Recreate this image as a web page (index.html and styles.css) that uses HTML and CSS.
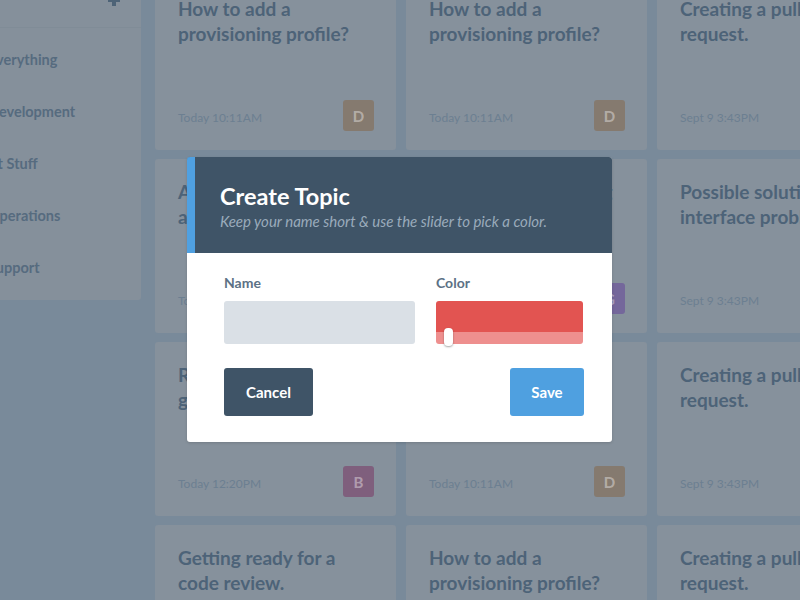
FILE: index.html
```html
<!DOCTYPE html>
<html>
<head>
<meta charset="utf-8">
<link rel="stylesheet" href="styles.css">
</head>
<body>
<div class="app">
  <aside class="sidebar">
    <div class="side-head">
      <svg class="plus" width="12" height="12" viewBox="0 0 12 12"><rect x="4" y="0" width="4" height="12" fill="#4d6377"/><rect x="0" y="4" width="12" height="4" fill="#4d6377"/></svg>
    </div>
    <ul class="topics">
      <li>Everything</li>
      <li>Development</li>
      <li>At Stuff</li>
      <li>Operations</li>
      <li>Support</li>
    </ul>
  </aside>
  <main class="grid">
    <div class="card"><h3>How to add a provisioning profile?</h3><div class="foot"><span class="date">Today 10:11AM</span><span class="av av-d">D</span></div></div>
    <div class="card"><h3>How to add a provisioning profile?</h3><div class="foot"><span class="date">Today 10:11AM</span><span class="av av-d">D</span></div></div>
    <div class="card"><h3>Creating a pull request.</h3><div class="foot"><span class="date">Sept 9 3:43PM</span><span class="av av-d">D</span></div></div>

    <div class="card"><h3>A quick guide to automated tests.</h3><div class="foot"><span class="date">Today 12:20PM</span><span class="av av-b">B</span></div></div>
    <div class="card"><h3>Setting up the staging server.</h3><div class="foot"><span class="date">Today 11:02AM</span><span class="av av-g">G</span></div></div>
    <div class="card"><h3>Possible solution to interface problem.</h3><div class="foot"><span class="date">Sept 9 3:43PM</span><span class="av av-d">D</span></div></div>

    <div class="card"><h3>Reviewing the new guidelines.</h3><div class="foot"><span class="date">Today 12:20PM</span><span class="av av-b">B</span></div></div>
    <div class="card"><h3>How to add a provisioning profile?</h3><div class="foot"><span class="date">Today 10:11AM</span><span class="av av-d">D</span></div></div>
    <div class="card"><h3>Creating a pull request.</h3><div class="foot"><span class="date">Sept 9 3:43PM</span><span class="av av-d">D</span></div></div>

    <div class="card"><h3>Getting ready for a code review.</h3><div class="foot"><span class="date">Today 12:20PM</span><span class="av av-b">B</span></div></div>
    <div class="card"><h3>How to add a provisioning profile?</h3><div class="foot"><span class="date">Today 10:11AM</span><span class="av av-d">D</span></div></div>
    <div class="card"><h3>Creating a pull request.</h3><div class="foot"><span class="date">Sept 9 3:43PM</span><span class="av av-d">D</span></div></div>
  </main>
</div>

<div class="modal">
  <div class="modal-head">
    <h2>Create Topic</h2>
    <p>Keep your name short &amp; use the slider to pick a color.</p>
  </div>
  <div class="modal-body">
    <div class="fields">
      <label class="field">
        <span class="label">Name</span>
        <span class="input"></span>
      </label>
      <div class="field">
        <span class="label">Color</span>
        <div class="color">
          <div class="swatch"></div>
          <div class="track"><span class="handle"></span></div>
        </div>
      </div>
    </div>
    <div class="actions">
      <button class="btn cancel">Cancel</button>
      <button class="btn save">Save</button>
    </div>
  </div>
</div>
</body>
</html>
```

FILE: styles.css
```css
* { box-sizing: border-box; }
html, body { margin: 0; padding: 0; }
body {
  width: 800px;
  height: 600px;
  overflow: hidden;
  background: #798a9a;
  font-family: "Lato", "Open Sans", sans-serif;
  position: relative;
}
.app {
  display: flex;
  align-items: flex-start;
}
.sidebar {
  width: 141px;
  flex: none;
  height: 300px;
  background: #85909b;
  border-radius: 0 0 3px 0;
  overflow: hidden;
}
.side-head {
  height: 28px;
  border-bottom: 1px solid #808c97;
  display: flex;
  justify-content: flex-end;
  padding-right: 21px;
}
.plus { margin-top: -6px; }
.topics {
  list-style: none;
  margin: 0 0 0 -12px;
  padding: 6px 0 0;
}
.topics li {
  height: 52px;
  line-height: 52px;
  font-weight: 700;
  font-size: 14.5px;
  color: #566b7f;
  white-space: nowrap;
}
.grid {
  margin-left: 14px;
  margin-top: -24px;
  display: grid;
  grid-template-columns: repeat(3, 241px);
  grid-auto-rows: 174px;
  gap: 9px 10px;
  flex: none;
}
.card {
  background: #86919c;
  border-radius: 3px;
  padding: 20px 22px 19px 23px;
  display: flex;
  flex-direction: column;
}
.card h3 {
  margin: 0;
  font-size: 19px;
  line-height: 25px;
  font-weight: 700;
  color: #4d6378;
  width: 185px;
}
.foot {
  margin-top: auto;
  display: flex;
  align-items: center;
  justify-content: space-between;
}
.date {
  font-size: 12px;
  color: #6c7f91;
  margin-top: 3px;
}
.av {
  width: 31px;
  height: 31px;
  border-radius: 3px;
  display: flex;
  align-items: center;
  justify-content: center;
  font-weight: 700;
  font-size: 15px;
  color: rgba(255,255,255,0.4);
}
.av-d { background: #857a6f; }
.av-b { background: #7f5f7d; }
.av-g { background: #74679b; }

.modal {
  position: absolute;
  left: 187px;
  top: 157px;
  width: 425px;
  height: 285px;
  background: #fff;
  border-radius: 3px;
  overflow: hidden;
  box-shadow: 0 1px 3px rgba(0,0,0,0.15);
}
.modal-head {
  height: 96px;
  background: #3f5467;
  border-left: 8px solid #4fa0e1;
  padding: 25px 0 0 25px;
}
.modal-head h2 {
  margin: 0;
  color: #fff;
  font-size: 23.5px;
  line-height: 28px;
  font-weight: 700;
}
.modal-head p {
  margin: 2px 0 0;
  font-size: 15px;
  line-height: 18px;
  font-style: italic;
  color: #9aabbb;
}
.modal-body {
  padding: 21px 29px 26px 37px;
}
.fields {
  display: grid;
  grid-template-columns: 191px 147px;
  gap: 21px;
}
.field { display: flex; flex-direction: column; }
.label {
  font-size: 14px;
  line-height: 18px;
  font-weight: 700;
  color: #5c7185;
  margin-bottom: 9px;
}
.input {
  height: 43px;
  background: #dae0e6;
  border-radius: 3px;
}
.color {
  height: 43px;
  border-radius: 3px;
  display: flex;
  flex-direction: column;
}
.swatch {
  height: 31px;
  background: #e25451;
  border-radius: 3px 3px 0 0;
}
.track {
  height: 12px;
  background: #ee8f8e;
  border-radius: 0 0 3px 3px;
  position: relative;
}
.handle {
  position: absolute;
  left: 8px;
  top: -4px;
  width: 9px;
  height: 18px;
  background: #fff;
  border-radius: 4px;
  box-shadow: 0 1px 2px rgba(0,0,0,0.35);
}
.actions {
  margin-top: 24px;
  display: flex;
  justify-content: space-between;
  margin-right: -1px;
}
.btn {
  height: 48px;
  border: 0;
  border-radius: 3px;
  color: #fff;
  font-family: inherit;
  font-weight: 700;
  font-size: 15px;
  padding: 0;
}
.cancel { width: 89px; background: #3f5467; }
.save { width: 74px; background: #4fa0e0; }
```
